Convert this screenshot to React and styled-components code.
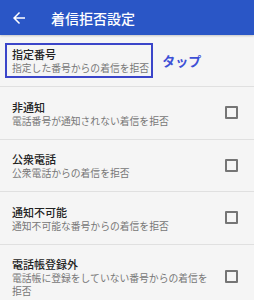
import styled, { createGlobalStyle } from 'styled-components'

const GlobalStyle = createGlobalStyle`
  body {
    margin: 0;
    background: #f5f5f5;
    font-family: "Noto Sans CJK JP", "Noto Sans", sans-serif;
  }
`

const Screen = styled.div`
  width: 254px;
  height: 300px;
  overflow: hidden;
  background: #f5f5f5;
`

const AppBar = styled.header`
  height: 35px;
  display: flex;
  align-items: center;
  background: #2a56c6;
  color: #fff;
  box-shadow: 0 1px 2px rgba(0, 0, 0, 0.2);
`

const BackButton = styled.div`
  width: 41px;
  padding-left: 10px;
  display: flex;
  align-items: center;
  svg { display: block; }
`

const Title = styled.h1`
  margin: 0;
  font-size: 14px;
  font-weight: 500;
  line-height: 1;
`

const List = styled.ul`
  margin: 0;
  padding: 0;
  list-style: none;
`

const Row = styled.li`
  display: flex;
  align-items: center;
  min-height: 52px;
  box-sizing: border-box;
  padding: ${p => (p.$first ? '0 0 0 5px' : '11.5px 0 11.5px 12px')};
  border-bottom: 1px solid #e0e0e0;
`

const Texts = styled.div`
  flex: 0 0 auto;
  width: ${p => (p.$boxed ? 'auto' : '200px')};
  display: flex;
  flex-direction: column;
  ${p => p.$boxed && `
    border: 2px solid #3b45c9;
    padding: 1px 2px 1px 5px;
  `}
`

const ItemTitle = styled.div`
  font-size: 11px;
  font-weight: 500;
  line-height: 16px;
  color: #222;
`

const ItemSub = styled.div`
  font-size: 9.8px;
  line-height: 12.5px;
  color: #777;
`

const TapLabel = styled.span`
  margin-left: 9px;
  font-size: 13px;
  font-weight: 700;
  color: #3d50d6;
`

const Check = styled.span`
  margin-left: auto;
  margin-right: 16px;
  width: 13px;
  height: 13px;
  box-sizing: border-box;
  border: 2px solid #757575;
  border-radius: 1px;
  flex-shrink: 0;
`

const items = [
  { title: '非通知', sub: '電話番号が通知されない着信を拒否' },
  { title: '公衆電話', sub: '公衆電話からの着信を拒否' },
  { title: '通知不可能', sub: '通知不可能な番号からの着信を拒否' },
  { title: '電話帳登録外', sub: '電話帳に登録をしていない番号からの着信を拒否' },
]

const ArrowBack = () => (
  <svg width="18" height="18" viewBox="0 0 24 24" fill="#fff">
    <path d="M20 11H7.83l5.59-5.59L12 4l-8 8 8 8 1.41-1.41L7.83 13H20v-2z" />
  </svg>
)

export default function App() {
  return (
    <Screen>
      <GlobalStyle />
      <AppBar>
        <BackButton><ArrowBack /></BackButton>
        <Title>着信拒否設定</Title>
      </AppBar>
      <List>
        <Row $first>
          <Texts $boxed>
            <ItemTitle>指定番号</ItemTitle>
            <ItemSub>指定した番号からの着信を拒否</ItemSub>
          </Texts>
          <TapLabel>タップ</TapLabel>
        </Row>
        {items.map(item => (
          <Row key={item.title}>
            <Texts>
              <ItemTitle>{item.title}</ItemTitle>
              <ItemSub>{item.sub}</ItemSub>
            </Texts>
            <Check />
          </Row>
        ))}
      </List>
    </Screen>
  )
}
